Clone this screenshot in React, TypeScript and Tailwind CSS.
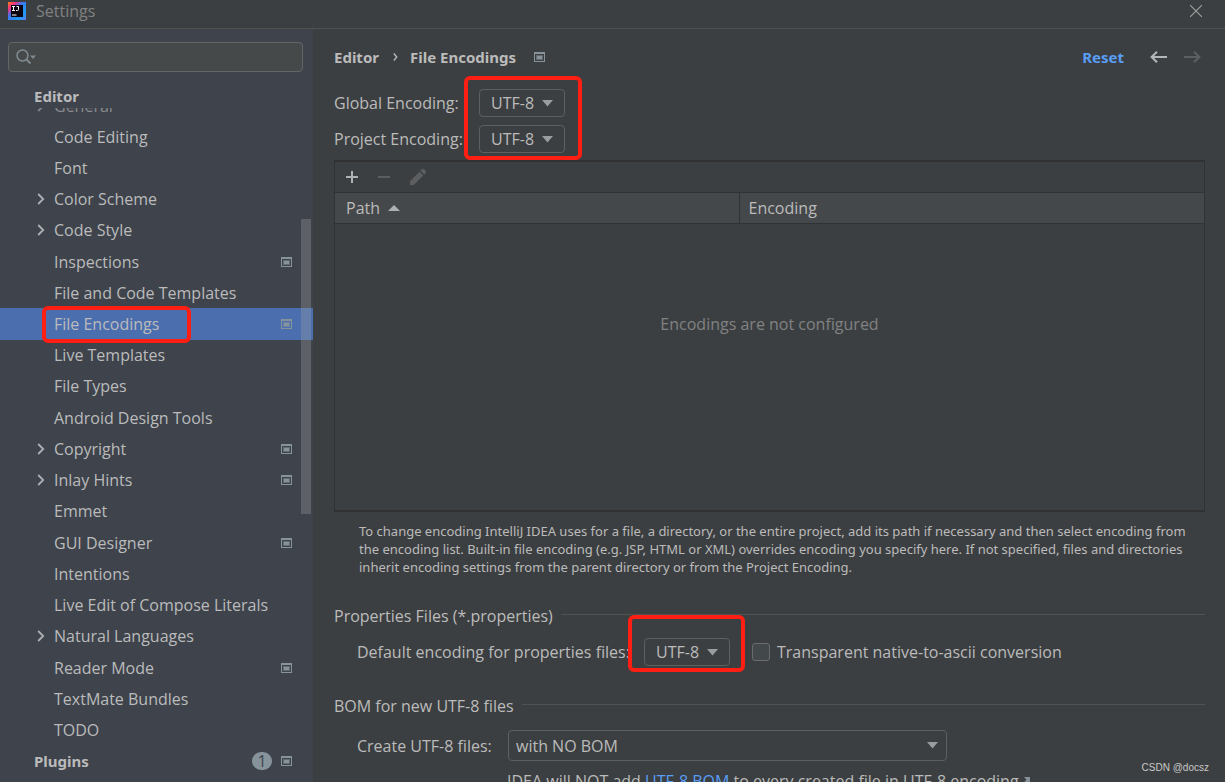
import { useState } from "react";

type Item = { label: string; expandable?: boolean; scoped?: boolean };

const ITEMS: Item[] = [
  { label: "Code Editing" },
  { label: "Font" },
  { label: "Color Scheme", expandable: true },
  { label: "Code Style", expandable: true },
  { label: "Inspections", scoped: true },
  { label: "File and Code Templates" },
  { label: "File Encodings", scoped: true },
  { label: "Live Templates" },
  { label: "File Types" },
  { label: "Android Design Tools" },
  { label: "Copyright", expandable: true, scoped: true },
  { label: "Inlay Hints", expandable: true, scoped: true },
  { label: "Emmet" },
  { label: "GUI Designer", scoped: true },
  { label: "Intentions" },
  { label: "Live Edit of Compose Literals" },
  { label: "Natural Languages", expandable: true },
  { label: "Reader Mode", scoped: true },
  { label: "TextMate Bundles" },
  { label: "TODO" },
];

function ScopeIcon() {
  return (
    <svg width="11" height="10" viewBox="0 0 11 10" className="shrink-0" aria-hidden="true">
      <path d="M0 0H11V10H0ZM1 2V9H10V2Z" fill="#87939a" fillRule="evenodd" />
      <rect x="2" y="3" width="7" height="5" fill="#87939a" opacity="0.5" />
      <rect x="3" y="4" width="5" height="3" fill="#87939a" />
    </svg>
  );
}

function Chevron() {
  return (
    <svg width="8" height="12" viewBox="0 0 8 12" fill="none" stroke="#adafb2" strokeWidth="1.8" aria-hidden="true">
      <path d="M1.2 1L6.2 6L1.2 11" />
    </svg>
  );
}

function DownTriangle() {
  return (
    <svg width="11" height="7" viewBox="0 0 11 7" aria-hidden="true">
      <path d="M0 0H11L5.5 6.5Z" fill="#9a9da0" />
    </svg>
  );
}

function EncodingSelect({ id }: { id: string }) {
  return (
    <div className="relative h-7 w-[86px]">
      <select
        id={id}
        className="h-full w-full appearance-none rounded border border-[#5e6060] bg-[#3c3f41] pl-[11px] text-base text-[#bbbbbb] outline-none"
      >
        <option>UTF-8</option>
        <option>UTF-16</option>
        <option>ISO-8859-1</option>
      </select>
      <span className="pointer-events-none absolute inset-y-0 right-3 flex items-center">
        <DownTriangle />
      </span>
    </div>
  );
}

function SectionTitle({ children }: { children: string }) {
  return (
    <div className="flex h-6 items-center gap-2">
      <h2 className="pt-[3px] whitespace-nowrap">{children}</h2>
      <div className="h-px flex-1 bg-[#515353]" />
    </div>
  );
}

function Highlight({ className }: { className: string }) {
  return <div className={`pointer-events-none absolute rounded-md border-4 border-[#fd1f13] ${className}`} />;
}

function Sidebar() {
  const [selected, setSelected] = useState("File Encodings");
  return (
    <aside className="relative flex w-[313px] shrink-0 flex-col bg-[#3e434c] pb-[5px]">
      <div className="px-2 pt-[13px] pr-[10px]">
        <label className="flex h-[30px] items-center rounded border border-[#646565] bg-[#45494a] pl-[7px]">
          <svg width="20" height="16" viewBox="0 0 20 16" fill="none" aria-hidden="true">
            <circle cx="6.5" cy="6.5" r="5.5" stroke="#7f8b91" strokeWidth="1.5" />
            <path d="M10.5 10.5L14.5 14.5" stroke="#7f8b91" strokeWidth="1.8" />
            <path d="M14 6.5H20L17 10Z" fill="#7f8b91" />
          </svg>
          <input aria-label="Search settings" className="min-w-0 flex-1 bg-transparent px-1 outline-none" />
        </label>
      </div>
      <div className="pt-[13px] pl-[34px]">
        <div className="h-[23px] font-['Noto_Sans',sans-serif] text-[15px] leading-[22px] font-bold">Editor</div>
      </div>
      <div className="flex h-[13px] items-end overflow-hidden">
        <button className="flex h-[31px] shrink-0 items-center pl-[37px] opacity-60">
          <span className="flex w-[17px]"><Chevron /></span>
          General
        </button>
      </div>
      <nav className="flex flex-1 flex-col">
        {ITEMS.map((item) => (
          <button
            key={item.label}
            onClick={() => setSelected(item.label)}
            className={`relative flex min-h-0 flex-1 items-center pr-[21px] pl-[37px] text-left ${selected === item.label ? "bg-[#4b6eaf]" : ""}`}
          >
            <span className="flex w-[17px] shrink-0">{item.expandable && <Chevron />}</span>
            <span className="flex-1 whitespace-nowrap">{item.label}</span>
            {item.scoped && <ScopeIcon />}
            {item.label === "File Encodings" && <Highlight className="-top-[2px] -bottom-[3px] left-[42px] w-[149px]" />}
          </button>
        ))}
        <button className="flex min-h-0 flex-1 items-center pr-[21px] pl-[34px] text-left">
          <span className="flex-1 font-['Noto_Sans',sans-serif] text-[15px] font-bold">Plugins</span>
          <span className="mr-[9px] flex h-[18px] w-5 items-center justify-center rounded-full bg-[#87939a] text-base text-[#3e434c]">
            1
          </span>
          <ScopeIcon />
        </button>
      </nav>
      <div className="absolute top-[190px] right-[2px] h-[295px] w-[10px] bg-[#a6a6a6]/30" />
    </aside>
  );
}

export default function App() {
  return (
    <div className="flex h-screen flex-col overflow-hidden bg-[#3c3f41] font-['Open_Sans',sans-serif] text-base text-[#bbbbbb]">
      <header className="flex h-[29px] shrink-0 items-start border-b border-[#515151] pr-[23px] pl-2">
        <svg width="18" height="18" viewBox="0 0 18 18" className="mt-[2px]" aria-hidden="true">
          <defs>
            <linearGradient id="ij" x1="0" y1="0" x2="1" y2="1">
              <stop offset="0" stopColor="#fc801d" />
              <stop offset="0.22" stopColor="#f5317f" />
              <stop offset="0.42" stopColor="#3b78f0" />
              <stop offset="0.75" stopColor="#1c9cf5" />
              <stop offset="1" stopColor="#5a7df5" />
            </linearGradient>
          </defs>
          <rect width="18" height="18" fill="url(#ij)" />
          <rect x="3" y="3" width="12" height="12" fill="#0b0410" />
          <path d="M4 4.5H7M5.5 4.5V8.5M4 8.5H7M8.5 4.5H10.5V7.5Q10.5 8.5 9.3 8.5H8M4 13H8.5" stroke="#fff" strokeWidth="1" fill="none" />
        </svg>
        <h1 className="ml-[10px] flex-1 leading-[23px] text-[#808283]">Settings</h1>
        <button aria-label="Close" className="mt-[5px]">
          <svg width="12" height="12" viewBox="0 0 12 12" stroke="#a0a2a3" strokeWidth="1.1" aria-hidden="true">
            <path d="M0 0L12 12M12 0L0 12" />
          </svg>
        </button>
      </header>

      <div className="flex min-h-0 flex-1">
        <Sidebar />

        <main className="min-w-0 flex-1 overflow-hidden pr-5 pl-[21px]">
          <div className="flex h-[60px] items-center pb-1 font-['Noto_Sans',sans-serif] text-[15px] font-bold">
            <span>Editor</span>
            <svg width="5" height="8" viewBox="0 0 5 8" fill="none" stroke="#bbbbbb" strokeWidth="1.3" className="mr-3 ml-[14px]" aria-hidden="true">
              <path d="M0.8 0.5L3.8 4L0.8 7.5" />
            </svg>
            <span className="mr-[18px]">File Encodings</span>
            <ScopeIcon />
            <button className="mr-[26px] ml-auto font-bold text-[#589df6]">Reset</button>
            <button aria-label="Back" className="mr-[17px]">
              <svg width="17" height="12" viewBox="0 0 17 12" fill="none" stroke="#b4b6b8" strokeWidth="2" aria-hidden="true">
                <path d="M17 6H2M7 0.8L1.6 6L7 11.2" />
              </svg>
            </button>
            <button aria-label="Forward" className="mr-1">
              <svg width="17" height="12" viewBox="0 0 17 12" fill="none" stroke="#5c5e60" strokeWidth="2" aria-hidden="true">
                <path d="M0 6H15M10 0.8L15.4 6L10 11.2" />
              </svg>
            </button>
          </div>

          <div className="relative grid w-fit grid-cols-[145px_auto] items-center gap-y-2">
            <label htmlFor="global">Global Encoding:</label>
            <EncodingSelect id="global" />
            <label htmlFor="project">Project Encoding:</label>
            <EncodingSelect id="project" />
            <Highlight className="-top-[13px] -right-[17px] -bottom-[7px] w-[118px]" />
          </div>

          <section className="mt-[7px] flex h-[352px] flex-col border-x border-y-2 border-[#323232]">
            <div className="flex h-[30px] items-center gap-[18px] pl-[10px]">
              <button aria-label="Add">
                <svg width="14" height="14" viewBox="0 0 14 14" stroke="#afb1b3" strokeWidth="2" aria-hidden="true">
                  <path d="M7 1V13M1 7H13" />
                </svg>
              </button>
              <button aria-label="Remove">
                <svg width="14" height="14" viewBox="0 0 14 14" stroke="#5c5e60" strokeWidth="2" aria-hidden="true">
                  <path d="M1 7H13" />
                </svg>
              </button>
              <button aria-label="Edit">
                <svg width="18" height="18" viewBox="0 0 18 18" fill="#5c5e60" aria-hidden="true">
                  <path d="M1 13.2L10.4 3.8L14.2 7.6L4.8 17H1ZM11.4 2.8L13 1.2Q14 .5 15 1.2L16.8 3Q17.5 4 16.8 5L15.2 6.6Z" />
                </svg>
              </button>
            </div>
            <table className="w-full table-fixed border-collapse text-left">
              <thead>
                <tr className="h-[31px] border-y border-[#323232] bg-[#45484a]">
                  <th scope="col" className="w-[404px] border-r border-[#323232] py-0 pl-[11px] font-normal">
                    <span className="flex items-center gap-2">
                      Path
                      <svg width="12" height="6" viewBox="0 0 12 6" aria-hidden="true">
                        <path d="M0 6L6 0L12 6Z" fill="#adafb2" />
                      </svg>
                    </span>
                  </th>
                  <th scope="col" className="py-0 pl-[9px] font-normal">Encoding</th>
                </tr>
              </thead>
            </table>
            <p className="pt-[88px] text-center text-[#808283]">Encodings are not configured</p>
          </section>

          <p className="mt-[10px] pl-[25px] font-['Noto_Sans',sans-serif] text-[13px] leading-[18px]">
            <span className="block whitespace-nowrap">
              To change encoding IntelliJ IDEA uses for a file, a directory, or the entire project, add its path if necessary and then select encoding from
            </span>
            <span className="block whitespace-nowrap">
              the encoding list. Built-in file encoding (e.g. JSP, HTML or XML) overrides encoding you specify here. If not specified, files and directories
            </span>
            <span className="block whitespace-nowrap">
              inherit encoding settings from the parent directory or from the Project Encoding.
            </span>
          </p>

          <div className="mt-[26px]">
            <SectionTitle>Properties Files (*.properties)</SectionTitle>
          </div>
          <div className="mt-3 flex h-7 items-center pl-[23px]">
            <label htmlFor="props" className="w-[287px] whitespace-nowrap">Default encoding for properties files:</label>
            <div className="relative">
              <EncodingSelect id="props" />
              <Highlight className="-top-[23px] -right-[15px] -bottom-[6px] w-[117px]" />
            </div>
            <label className="ml-[22px] flex items-center gap-[7px] whitespace-nowrap">
              <input type="checkbox" className="h-[18px] w-[18px] appearance-none rounded-[3px] border border-[#6b6b6b] bg-[#43494a] checked:bg-[#4b6eaf]" />
              Transparent native-to-ascii conversion
            </label>
          </div>

          <div className="mt-[26px]">
            <SectionTitle>BOM for new UTF-8 files</SectionTitle>
          </div>
          <div className="mt-[14px] flex items-center pl-[23px]">
            <label htmlFor="bom" className="w-[151px] whitespace-nowrap">Create UTF-8 files:</label>
            <div className="relative h-[31px] w-[439px]">
              <select id="bom" className="h-full w-full appearance-none rounded border border-[#5e6060] bg-[#3c3f41] pl-[7px] outline-none">
                <option>with NO BOM</option>
                <option>with BOM</option>
              </select>
              <span className="pointer-events-none absolute inset-y-0 right-[9px] flex items-center">
                <DownTriangle />
              </span>
            </div>
          </div>
          <p className="mt-2 flex h-6 items-center gap-1 pl-[173px] whitespace-nowrap">
            <span>
              IDEA will NOT add <a href="#bom" className="text-[#589df6]">UTF-8 BOM</a> to every created file in UTF-8 encoding
            </span>
            <svg width="8" height="8" viewBox="0 0 8 8" fill="#87939a" aria-hidden="true">
              <path d="M1 0H7V6L5.2 4.4L2 7.6L.6 6.2L3.4 2.6Z" />
            </svg>
          </p>
        </main>
      </div>
      <div className="pointer-events-none absolute right-[16px] bottom-[7px] font-['Liberation_Sans',sans-serif] text-[10px] text-[#c8c8c8]">
        CSDN @docsz
      </div>
    </div>
  );
}
